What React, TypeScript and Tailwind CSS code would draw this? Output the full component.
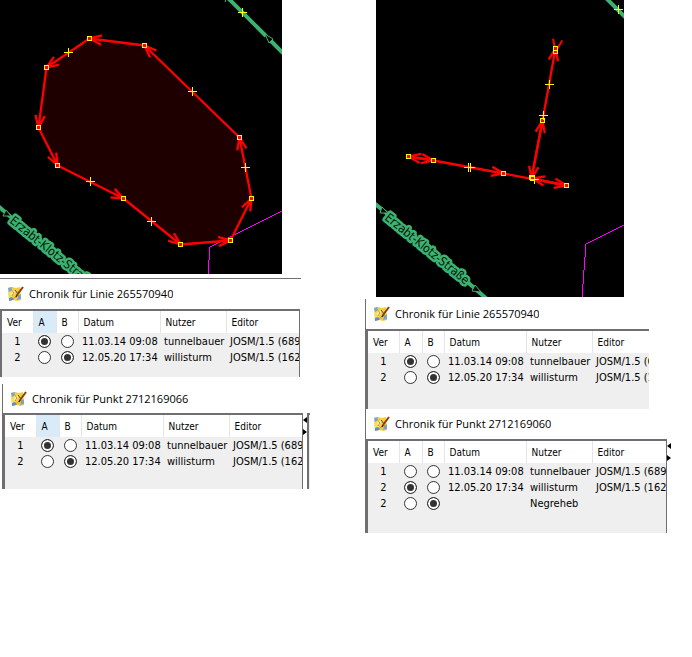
import clsx from "clsx";
import type { ReactNode } from "react";

type Point = [number, number];

type Version = {
  ver: number;
  date?: string;
  user: string;
  editor?: string;
};

const WAY_GREEN = "#3cb371";

const VERSIONS: Version[] = [
  { ver: 1, date: "11.03.14 09:08", user: "tunnelbauer", editor: "JOSM/1.5 (689" },
  { ver: 2, date: "12.05.20 17:34", user: "willisturm", editor: "JOSM/1.5 (162" },
];

/* ---------- map drawing ---------- */

// Open arrow head with its tip on `to`, coming from `from`
function arrowHead(from: Point, to: Point) {
  const angle = Math.atan2(from[1] - to[1], from[0] - to[0]);
  const barb = (turn: number) =>
    `${to[0] + 13 * Math.cos(angle + turn)} ${to[1] + 13 * Math.sin(angle + turn)}`;
  return `M${barb(-0.37)}L${to[0]} ${to[1]}L${barb(0.37)}`;
}

function Arrow({ from, to }: { from: Point; to: Point }) {
  return (
    <path
      d={`M${from[0]} ${from[1]}L${to[0]} ${to[1]}${arrowHead(from, to)}`}
      transform="translate(.5 .5)"
      fill="none"
      stroke="#f00"
      strokeWidth="2.3"
    />
  );
}

function Node({ at }: { at: Point }) {
  return (
    <rect x={at[0] - 1.5} y={at[1] - 1.5} width="4" height="4" fill="#f00" stroke="#ff0" shapeRendering="crispEdges" />
  );
}

function Cross({ at }: { at: Point }) {
  return (
    <path
      d={`M${at[0] - 4} ${at[1] + 0.5}h9M${at[0] + 0.5} ${at[1] - 4}v9`}
      stroke="#ff0"
      shapeRendering="crispEdges"
    />
  );
}

function StreetLabel({ x, y }: { x: number; y: number }) {
  return (
    <text
      transform={`translate(${x} ${y}) rotate(39)`}
      className="font-['DejaVu_Sans_Condensed','DejaVu_Sans',sans-serif] text-[12px]"
      fill="#04140b"
      stroke={WAY_GREEN}
      strokeWidth="5"
      strokeLinejoin="round"
      paintOrder="stroke"
    >
      Erzabt-Klotz-Straße
    </text>
  );
}

const RING: Point[] = [
  [239, 137], [144, 45], [89, 38], [46, 67], [38, 127],
  [57, 165], [123, 198], [180, 244], [230, 240], [251, 198],
];
const RING_CROSSES: Point[] = [[68, 52], [192, 91], [90, 181], [151, 221], [245, 167], [242, 12]];

function AreaMap() {
  return (
    <svg viewBox="0 0 282 274" className="block w-full max-w-[282px] bg-black" role="img" aria-label="Fläche">
      <path d="M227-3L266 36M271 41L283 53" stroke={WAY_GREEN} strokeWidth="4" />
      <path d="M225 2L226-1L231 1" stroke={WAY_GREEN} fill="none" />
      <path d="M265 34L273 39L269 43Z" fill="#000" stroke={WAY_GREEN} />
      <path d="M-2 206L12 218" stroke={WAY_GREEN} strokeWidth="4" />
      <path d="M6 210L11 216L3 216Z" fill="#000" stroke={WAY_GREEN} />
      <StreetLabel x={9} y={222} />
      <polygon points={RING.map((p) => p.join()).join(" ")} fill="#1f0000" />
      <path d="M282 211L210 247L208 274" fill="none" stroke="#f0f" shapeRendering="crispEdges" />
      {RING.map((p, i) => (
        <Arrow key={i} from={p} to={RING[(i + 1) % RING.length]} />
      ))}
      {RING.map((p, i) => (
        <Node key={i} at={p} />
      ))}
      {RING_CROSSES.map((p, i) => (
        <Cross key={i} at={p} />
      ))}
    </svg>
  );
}

const SEGMENTS: [Point, Point][] = [
  [[57, 160], [32, 156]],
  [[32, 156], [57, 160]],
  [[57, 160], [127, 173]],
  [[127, 173], [190, 185]],
  [[190, 185], [156, 178]],
  [[166, 120], [155, 178]],
  [[155, 178], [166, 120]],
  [[166, 120], [179, 48]],
];
const LINE_NODES: Point[] = [
  [32, 156], [57, 160], [127, 173], [155, 177], [156, 178], [190, 185], [166, 120], [179, 51], [179, 48],
];
const LINE_CROSSES: Point[] = [[92, 167], [94, 167], [158, 179], [173, 84], [167, 115], [242, 9]];

function LineMap() {
  return (
    <svg viewBox="0 0 248 297" className="block w-full max-w-[248px] bg-black" role="img" aria-label="Linie">
      <path d="M229-3L250 18" stroke={WAY_GREEN} strokeWidth="4" />
      <path d="M-2 203L14 216M88 279L112 300" stroke={WAY_GREEN} strokeWidth="4" />
      <path d="M6 207L12 213L4 213Z" fill="#000" stroke={WAY_GREEN} />
      <path d="M99 285L105 292L96 291Z" fill="#000" stroke={WAY_GREEN} />
      <StreetLabel x={8} y={219} />
      <path d="M248 225L210 244L206 297" fill="none" stroke="#f0f" shapeRendering="crispEdges" />
      {SEGMENTS.map(([from, to], i) => (
        <Arrow key={i} from={from} to={to} />
      ))}
      <path
        d={arrowHead([181, 40], [179, 51])}
        transform="translate(.5 .5)"
        fill="none"
        stroke="#f00"
        strokeWidth="2"
      />
      {LINE_NODES.map((p, i) => (
        <Node key={i} at={p} />
      ))}
      {LINE_CROSSES.map((p, i) => (
        <Cross key={i} at={p} />
      ))}
    </svg>
  );
}

/* ---------- history windows ---------- */

function AppIcon() {
  return (
    <svg viewBox="0 0 16 16" className="size-4 shrink-0" aria-hidden="true">
      <path d="M0 2L4 1L8 2L12 1L13 14L9 15L5 14L1 15Z" fill="#f3cf3d" />
      <path d="M0 2L4 1L5 14L1 15Z" fill="#f7dc62" />
      <path d="M0 2L4 1L3 5L1 6ZM10 10L13 8V13L9 14Z" fill="#6fa8dc" />
      <path d="M1 12L4 11L6 13L5 14L1 15Z" fill="#5b8fc9" />
      <path d="M4 5L8 4L6 9L3 9Z" fill="#fff0a0" />
      <path d="M3 3L6 7L4 10M6 12L10 9L12 12" fill="none" stroke="#d98c22" />
      <path d="M15 1L9 9" stroke="#8a3f12" strokeWidth="2" />
      <path d="M9 9L8 11" stroke="#2d2d2d" strokeWidth="1.5" />
      <path d="M7 4L10 8" stroke="#4b4b4b" strokeWidth="1" />
    </svg>
  );
}

function HeadCell({ children, active }: { children: ReactNode; active?: boolean }) {
  return (
    <th
      scope="col"
      className={clsx(
        "overflow-hidden border-r border-[#e5e5e5] pt-[2px] pl-[5px] text-left font-normal last:border-r-0",
        active ? "bg-[#d9ebf9]" : "bg-white",
      )}
    >
      {children}
    </th>
  );
}

type HistoryProps = {
  id: string;
  title: string;
  rows: Version[];
  selected: [number, number];
  activeA?: boolean;
  className?: string;
  headerClassName?: string;
  tableClassName?: string;
  splitter?: boolean;
};

function HistoryWindow({
  id,
  title,
  rows,
  selected,
  activeA,
  className,
  headerClassName = "h-[30px]",
  tableClassName,
  splitter,
}: HistoryProps) {
  return (
    <section className={clsx("w-full bg-white", className)} aria-labelledby={`${id}-title`}>
      <header className={clsx("flex items-center gap-[5px] pl-2", headerClassName)}>
        <AppIcon />
        <h2 id={`${id}-title`} className="truncate font-['Open_Sans',sans-serif] text-[11px] leading-4">
          {title}
        </h2>
      </header>
      <div className="flex">
        <div
          className={clsx(
            "min-w-0 flex-1 overflow-hidden border-t-2 border-l-2 border-[#6e6e73] bg-[#efefef]",
            tableClassName,
          )}
        >
          <table className="w-full table-fixed border-collapse whitespace-nowrap">
            <colgroup>
              <col className="w-[31px]" />
              <col className="w-[23px]" />
              <col className="w-[22px]" />
              <col className="w-[82px]" />
              <col className="w-[66px]" />
              <col />
            </colgroup>
            <thead>
              <tr className="h-[22px] text-[10px] leading-4">
                <HeadCell>Ver</HeadCell>
                <HeadCell active={activeA}>A</HeadCell>
                <HeadCell>B</HeadCell>
                <HeadCell>Datum</HeadCell>
                <HeadCell>Nutzer</HeadCell>
                <HeadCell>Editor</HeadCell>
              </tr>
            </thead>
            <tbody>
              {rows.map((row, i) => (
                <tr key={i} className="h-4 text-[11px] leading-[14px]">
                  <td className="pt-[2px] text-center">{row.ver}</td>
                  {["A", "B"].map((side, s) => (
                    <td key={side}>
                      <input
                        type="radio"
                        name={`${id}-${side}`}
                        aria-label={`${side}: Version ${row.ver}`}
                        defaultChecked={selected[s] === i}
                        className="mx-auto block size-[13px] appearance-none rounded-full border border-[#333] bg-white checked:bg-[#333] checked:shadow-[inset_0_0_0_2px_#fff]"
                      />
                    </td>
                  ))}
                  <td className="overflow-hidden pt-[2px] pl-1">{row.date}</td>
                  <td className="overflow-hidden pt-[2px] pl-1">{row.user}</td>
                  <td className="overflow-hidden pt-[2px] pl-1">{row.editor}</td>
                </tr>
              ))}
            </tbody>
          </table>
        </div>
        {splitter && (
          <div className="flex w-1 flex-col gap-[6px] pt-1">
            <button type="button" aria-label="Nach links" className="h-[6px] w-1">
              <svg viewBox="0 0 4 6" className="block h-[6px] w-1">
                <path d="M4 0V6L0 3Z" />
              </svg>
            </button>
            <button type="button" aria-label="Nach rechts" className="h-[6px] w-1">
              <svg viewBox="0 0 4 6" className="block h-[6px] w-1">
                <path d="M0 0V6L4 3Z" />
              </svg>
            </button>
          </div>
        )}
      </div>
    </section>
  );
}

export default function App() {
  return (
    <main className="grid min-h-screen grid-cols-[365fr_327fr] items-start bg-white font-['DejaVu_Sans_Condensed','DejaVu_Sans',sans-serif] text-black">
      <div className="flex flex-col">
        <AreaMap />
        <HistoryWindow
          id="line-left"
          title="Chronik für Linie 265570940"
          rows={VERSIONS}
          selected={[0, 1]}
          activeA
          className="mt-1 max-w-[301px] border-t border-[#6e6e73] pr-px"
          tableClassName="border-r pb-3"
        />
        <div className="mt-[7px] ml-[2px] flex max-w-[308px]">
          <HistoryWindow
            id="point-left"
            title="Chronik für Punkt 2712169066"
            rows={VERSIONS}
            selected={[0, 1]}
            activeA
            className="border-l border-[#6e6e73]"
            headerClassName="h-[29px]"
            tableClassName="border-r pb-5"
            splitter
          />
          <div className="mt-[29px] w-[3px] shrink-0 border-t-2 border-l-2 border-[#6e6e73] bg-[#efefef]" />
        </div>
      </div>

      <div className="flex flex-col">
        <div className="pl-[11px]">
          <LineMap />
        </div>
        <div className="mt-[2px] max-w-[306px] border-l border-[#6e6e73]">
          <HistoryWindow
            id="line-right"
            title="Chronik für Linie 265570940"
            rows={VERSIONS}
            selected={[0, 1]}
            className="max-w-[283px]"
            tableClassName="pb-6"
          />
          <HistoryWindow
            id="point-right"
            title="Chronik für Punkt 2712169060"
            rows={[...VERSIONS, { ver: 2, user: "Negreheb" }]}
            selected={[1, 2]}
            tableClassName="border-r pb-[22px]"
            splitter
          />
        </div>
      </div>
    </main>
  );
}
